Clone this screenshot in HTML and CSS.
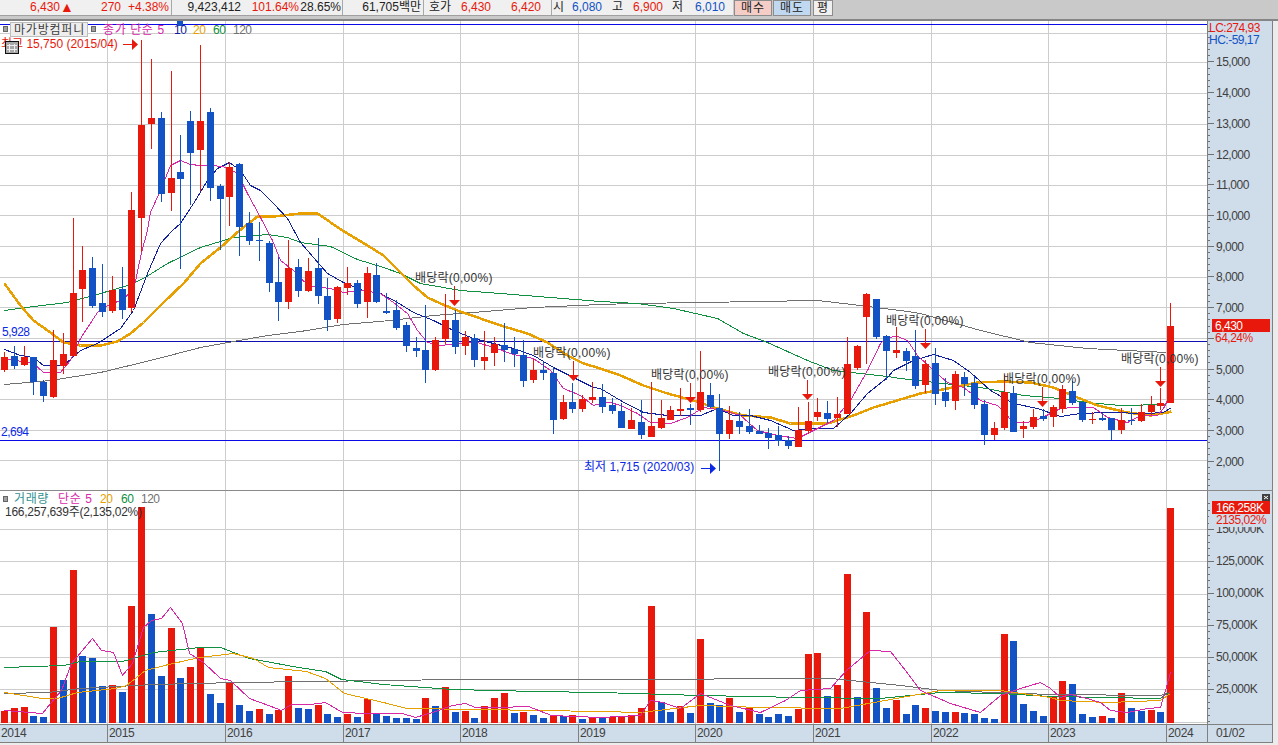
FILE: index.html
```html
<!DOCTYPE html>
<html lang="ko">
<head>
    <meta charset="UTF-8">
    <title>마가방컴퍼니 - 월봉 차트</title>
    <link rel="stylesheet" href="styles.css">
</head>
<body>
    <div class="quote-bar">
        <div class="quote-cells">
            <div class="cell">
                <span class="red w60">6,430</span><span class="red tri">▲</span><span class="red w48">270</span><span class="red w48">+4.38%</span>
            </div>
            <div class="cell">
                <span class="w69">9,423,412</span><span class="red w58">101.64%</span><span class="w42">28.65%</span>
            </div>
            <div class="cell">
                <span class="w78">61,705백만</span>
            </div>
            <div class="cell">
                <span class="w27">호가</span><span class="red w40">6,430</span><span class="red w50">6,420</span><span class="w10"></span>
            </div>
            <div class="cell last">
                <span class="w12">시</span><span class="blue w38">6,080</span><span class="w21">고</span><span class="red w40">6,900</span><span class="w20">저</span><span class="blue w42">6,010</span><span class="w8"></span>
            </div>
        </div>
        <button class="btn buy">매수</button>
        <button class="btn sell">매도</button>
        <button class="btn avg">평</button>
    </div>

    <div class="chart">
        <div class="pane price-pane">
            <svg class="plot" id="pricePlot" viewBox="0 21 1207 469"></svg>
            <svg class="axis" id="priceAxis" viewBox="1208 21 64 469"></svg>
        </div>
        <div class="pane volume-pane">
            <svg class="plot" id="volumePlot" viewBox="0 491 1207 233"></svg>
            <svg class="axis" id="volumeAxis" viewBox="1208 491 64 233"></svg>
        </div>
        <div class="dates" id="dates"></div>
    </div>

    <script src="chart.js"></script>
</body>
</html>
```

FILE: styles.css
```css
* {
    box-sizing: border-box;
}

html, body {
    margin: 0;
    padding: 0;
    height: 745px;
    overflow: hidden;
}

body {
    background: #ececec;
    color: #222;
    font-family: "Liberation Sans", "Noto Sans CJK KR", sans-serif;
    font-size: 12px;
}

.red { color: #e8180c; }
.blue { color: #1252c4; }

/* Quote strip */
.quote-bar {
    display: flex;
    height: 21px;
    background: #c9c9c9;
    border-bottom: 2px solid #858585;
}

.quote-cells {
    display: flex;
    width: 733px;
    height: 16px;
    background: #f0f0f0;
    border-bottom: 1px solid #a0a0a0;
    line-height: 15px;
}

.cell {
    display: flex;
    border-right: 1px solid #a8a8a8;
}

.cell.last {
    border-right: none;
}

.cell span {
    display: block;
    text-align: right;
    white-space: nowrap;
}

.cell .tri { width: 13px; font-size: 14px; line-height: 14px; }
.w8 { width: 8px; }
.w10 { width: 10px; }
.w12 { width: 12px; }
.w20 { width: 20px; }
.w21 { width: 21px; }
.w27 { width: 27px; }
.w38 { width: 38px; }
.w40 { width: 40px; }
.w42 { width: 42px; }
.w48 { width: 48px; }
.w50 { width: 50px; }
.w58 { width: 58px; }
.w60 { width: 60px; }
.w69 { width: 69px; }
.w78 { width: 78px; }

.quote-cells .cell:nth-child(1) { width: 172px; }
.quote-cells .cell:nth-child(2) { width: 171px; }
.quote-cells .cell:nth-child(3) { width: 81px; }
.quote-cells .cell:nth-child(4) { width: 128px; }

.btn {
    height: 16px;
    margin: 0 0 0 1px;
    padding: 0;
    border: 1px solid #8c8c8c;
    font: inherit;
    line-height: 13px;
    letter-spacing: 1px;
    color: #222;
}

.buy { width: 38px; background: #f4cdc6; }
.sell { width: 38px; background: #c0d8f0; }
.avg { width: 20px; margin-left: 2px; background: #f0f0f0; }

/* Chart */
.chart {
    width: 1273px;
}

.pane {
    display: flex;
    background: #fff;
}

.price-pane {
    height: 470px;
    border-bottom: 1px solid #8a8a8a;
}

.volume-pane {
    height: 233px;
}

.plot {
    display: block;
    width: 1207px;
    height: 100%;
    flex: none;
}

.price-pane .plot,
.price-pane .axis {
    height: 469px;
}

.axis {
    display: block;
    width: 66px;
    height: 100%;
    flex: none;
    background: #cfdcea;
    border-left: 1px solid #808080;
    border-right: 1px solid #808080;
}

.dates {
    display: flex;
    height: 19px;
    background: #cfdcea;
    border-top: 1px solid #808080;
    border-bottom: 1px solid #808080;
    border-right: 1px solid #808080;
    color: #404040;
    line-height: 17px;
    letter-spacing: -0.3px;
}

.dates span {
    flex: none;
    padding-left: 1px;
    border-right: 1px solid #808080;
}

.dates span:last-child {
    padding-left: 8px;
    border-right: none;
}

/* SVG parts */
svg text {
    font-family: "Liberation Sans", "Noto Sans CJK KR", sans-serif;
    font-size: 12px;
    letter-spacing: -0.5px;
    dominant-baseline: central;
    white-space: pre;
}

svg text.spaced { letter-spacing: 0.6px; }
svg text.tag { letter-spacing: 0.8px; }
svg text.plain { letter-spacing: 0; }
svg text.tight { letter-spacing: -0.28px; }
svg text.dividend { letter-spacing: 0.25px; fill: #333; }

.grid { stroke: #cdcdcd; stroke-width: 1; shape-rendering: crispEdges; }
.tick { stroke: #707070; stroke-width: 1; shape-rendering: crispEdges; }
.level { stroke-width: 1; shape-rendering: crispEdges; }

.ma { fill: none; stroke-width: 1; shape-rendering: crispEdges; }
.ma5 { stroke: #d828a8; }
.ma10 { stroke: #10209c; }
.ma20 { stroke: #e8a000; }
.ma20.thick { stroke-width: 2.5; }
.ma60 { stroke: #109040; }
.ma120 { stroke: #707070; }

.up { fill: #e8180c; }
.down { fill: #1252c4; }

.t-red { fill: #e8180c; }
.t-blue { fill: #1252c4; }
.t-lblue { fill: #0a28e6; }
.t-white { fill: #fff; }
.t-dark { fill: #333; }
.t-axis { fill: #404040; }
.t-mag { fill: #d828a8; }
.t-navy { fill: #10209c; }
.t-org { fill: #e8a000; }
.t-grn { fill: #109040; }
.t-gray { fill: #707070; }
.t-teal { fill: #309090; }

.stock-tag { fill: #eeeeee; stroke: #bdbdbd; shape-rendering: crispEdges; }
.bullet { fill: #a0a0a0; stroke: #666; shape-rendering: crispEdges; }
```

FILE: chart.js
```js
// monthly candles, values are pixel rows of the plot: [colour, body top, body bottom, high, low]
const candles = [
    ['r',357,370,352,372],['b',356,366,346,369],['r',357,365,346,366],['b',357,382,357,395],['b',382,396,380,402],
    ['r',360,397,330,398],['r',354,366,333,374],['r',293,356,218,356],['r',270,289,246,322],['b',268,306,257,308],
    ['b',303,312,264,317],['r',290,311,276,313],['b',289,310,267,319],['r',210,308,192,312],['r',125,218,40,252],
    ['r',118,124,59,149],['b',118,194,112,202],['r',178,193,71,211],['b',172,179,135,269],['b',121,153,111,205],
    ['r',121,150,45,191],['b',112,188,108,201],['b',186,199,184,250],['r',167,197,162,226],['b',164,227,163,256],
    ['b',223,241,212,245],['b',240,241,222,261],['b',243,283,241,292],['b',282,302,257,321],['r',268,302,240,309],
    ['b',267,291,259,297],['r',271,291,258,292],['b',268,296,238,304],['b',296,320,278,331],['r',287,319,286,323],
    ['r',283,288,267,295],['b',283,304,280,308],['r',273,302,267,318],['b',275,302,263,303],['b',311,313,293,314],
    ['b',310,328,300,330],['b',325,346,322,352],['b',348,351,337,357],['b',350,370,305,383],['r',340,370,337,371],
    ['r',320,339,294,344],['b',320,347,310,354],['r',337,346,331,355],['b',338,360,334,367],['r',357,361,331,370],
    ['r',344,353,337,366],['b',345,350,323,362],['b',349,354,337,367],['b',355,381,340,387],['r',370,380,359,383],
    ['b',370,373,362,380],['b',373,420,367,434],['r',402,419,395,420],['b',402,409,383,413],['r',399,409,395,412],
    ['r',397,400,382,403],['b',397,407,384,413],['b',405,411,398,414],['b',411,428,403,428],['r',420,429,408,429],
    ['b',422,435,400,439],['r',426,437,382,437],['r',418,428,400,429],['r',410,420,406,420],['r',409,411,388,416],
    ['b',408,410,404,425],['r',392,410,351,412],['b',395,407,383,408],['b',408,434,394,471],['r',420,434,406,439],
    ['b',421,427,412,434],['b',426,432,409,434],['b',431,434,425,434],['b',433,438,428,449],['b',435,441,426,446],
    ['b',440,446,436,449],['r',430,447,407,447],['r',421,431,402,434],['r',412,417,398,421],['b',413,419,401,423],
    ['r',414,418,397,427],['r',364,414,337,414],['r',346,368,345,370],['r',294,317,293,364],['b',299,337,299,339],
    ['b',336,351,335,380],['r',350,353,327,358],['b',351,361,348,371],['b',356,386,330,389],['r',364,385,360,393],
    ['b',363,394,348,405],['b',392,401,378,407],['r',374,401,371,410],['b',377,384,372,396],['b',383,405,376,409],
    ['b',404,435,400,445],['r',428,435,422,440],['r',392,428,375,430],['b',393,432,386,432],['r',426,429,421,438],
    ['r',417,427,409,429],['b',416,419,409,421],['r',407,417,405,427],['r',389,409,385,413],['b',391,403,381,405],
    ['b',402,420,402,422],['r',419,420,412,424],['b',418,420,413,421],['b',418,430,418,440],['r',420,430,408,434],
    ['b',420,421,408,425],['r',412,421,404,422],['r',405,412,396,415],['r',403,406,388,410],['r',326,403,303,403]
];

const volumes = [
    ['r',711],['r',708],['r',707],['b',716],['b',717],['r',627],['b',680],['r',570],['b',656],['b',658],
    ['b',686],['r',685],['b',692],['r',606],['r',507],['b',614],['b',676],['r',628],['b',678],['r',667],
    ['r',647],['b',694],['b',703],['r',682],['b',705],['b',711],['r',709],['b',714],['r',710],['r',676],
    ['b',708],['b',709],['r',705],['b',714],['b',717],['r',714],['b',717],['r',699],['b',713],['b',716],
    ['b',718],['b',718],['b',719],['r',698],['b',706],['r',687],['b',712],['r',711],['b',718],['r',706],
    ['r',698],['r',693],['b',713],['r',712],['b',715],['b',718],['r',716],['b',716],['r',715],['b',719],
    ['r',717],['b',718],['r',717],['r',716],['r',715],['r',708],['r',606],['b',702],['b',712],['r',706],
    ['b',713],['r',639],['b',703],['b',705],['r',698],['b',712],['r',707],['b',714],['b',717],['b',714],
    ['b',716],['r',709],['r',654],['r',653],['b',696],['r',685],['r',574],['b',697],['r',612],['b',688],
    ['b',708],['r',700],['b',714],['b',705],['r',708],['b',711],['b',712],['r',712],['b',713],['b',714],
    ['b',718],['b',719],['r',634],['b',641],['b',704],['b',711],['b',716],['r',696],['r',681],['b',684],
    ['b',714],['b',717],['r',716],['b',718],['r',693],['b',708],['b',711],['r',710],['b',712],['r',508]
];

const priceLines = [
    ['ma120', [4,384, 50,380, 100,372, 150,360, 200,347, 233,341, 267,335, 300,331, 343,324, 390,320, 433,315, 473,312, 533,307, 600,304, 633,303, 700,302, 817,300, 843,303, 900,310, 920,313, 980,330, 1030,342, 1087,348, 1166,352]],
    ['ma60', [4,310, 33,306, 67,302, 100,293, 127,285, 143,278, 167,263, 200,247, 233,237, 267,234, 287,237, 300,242, 330,246, 357,259, 383,267, 400,273, 420,283, 460,290, 500,293, 550,297, 600,301, 637,303, 673,308, 717,318, 743,333, 767,342, 807,360, 833,370, 887,376, 900,378, 943,383, 980,387, 1023,395, 1060,398, 1087,402, 1120,405, 1166,404]],
    ['ma20 thick', [4,283, 20,305, 33,320, 50,332, 63,342, 80,345, 100,345, 117,341, 130,333, 143,322, 163,302, 183,283, 200,263, 220,247, 239,230, 257,216, 273,216, 300,213, 317,213, 342,230, 367,245, 383,255, 400,272, 413,285, 427,297, 440,303, 457,310, 480,318, 500,325, 527,333, 547,342, 567,355, 583,363, 600,368, 620,375, 643,385, 667,393, 693,400, 717,408, 743,415, 770,417, 790,423, 827,423, 853,415, 873,407, 900,399, 920,393, 947,388, 977,382, 1003,381, 1030,382, 1053,387, 1077,397, 1097,405, 1127,412, 1150,415, 1167,412, 1171,411]],
    ['ma10', [4,349, 20,355, 33,357, 43,365, 63,365, 80,350, 97,343, 120,328, 133,310, 147,273, 160,243, 172,230, 180,223, 193,203, 207,180, 217,168, 229,162, 240,170, 250,185, 260,190, 273,203, 287,218, 300,242, 327,273, 343,282, 363,290, 380,293, 397,302, 413,312, 433,320, 453,330, 473,338, 493,343, 513,348, 533,355, 553,367, 573,377, 593,387, 600,388, 620,400, 643,412, 667,415, 700,415, 717,408, 733,415, 750,415, 770,420, 793,430, 813,428, 833,428, 850,413, 867,393, 887,377, 893,370, 913,360, 933,354, 953,360, 970,372, 990,390, 1013,403, 1037,408, 1060,416, 1080,413, 1107,412, 1147,413, 1163,412, 1171,407]],
    ['ma5', [4,358, 33,363, 43,372, 60,372, 70,360, 80,338, 97,312, 107,305, 120,300, 133,290, 141,252, 147,230, 150,212, 160,190, 170,165, 180,160, 190,164, 200,165, 213,165, 227,167, 237,173, 247,193, 260,217, 272,240, 280,260, 293,270, 300,278, 310,286, 330,288, 343,292, 363,290, 380,293, 393,302, 407,313, 417,330, 427,342, 440,345, 460,343, 477,342, 493,347, 513,354, 533,358, 550,370, 563,388, 580,395, 593,405, 600,403, 610,402, 620,405, 637,413, 650,422, 670,423, 687,417, 703,407, 723,410, 740,415, 757,430, 777,435, 797,438, 813,430, 833,420, 850,400, 867,370, 880,343, 887,337, 897,336, 907,340, 917,355, 933,370, 947,382, 963,387, 980,400, 997,405, 1013,422, 1027,422, 1040,418, 1060,408, 1073,407, 1093,407, 1107,417, 1127,422, 1140,415, 1157,415, 1163,408, 1167,400]]
];

const volumeLines = [
    ['ma120', [4,693, 48,692, 80,688, 153,684, 237,682, 459,679, 600,679, 830,678, 900,685, 940,690, 1050,694, 1160,695, 1170,692]],
    ['ma60', [4,667, 63,665, 80,661, 122,661, 153,652, 199,647, 220,647, 249,658, 298,667, 325,671, 341,679, 383,684, 452,689, 536,691, 600,692, 700,695, 800,697, 880,698, 940,692, 1000,693, 1050,696, 1160,698, 1168,692]],
    ['ma20', [4,692, 42,698, 57,698, 77,692, 115,688, 126,685, 145,670, 168,664, 199,657, 233,653, 253,658, 268,667, 306,671, 325,678, 344,693, 383,702, 406,708, 478,709, 600,711, 640,712, 700,705, 760,707, 840,708, 940,690, 1000,690, 1050,697, 1060,700, 1107,702, 1160,700, 1170,693]],
    ['ma5', [4,710, 42,713, 50,703, 61,690, 71,663, 92,638, 101,650, 113,652, 122,675, 132,663, 143,627, 151,620, 161,618, 170,607, 182,623, 189,653, 203,662, 220,678, 230,680, 249,698, 268,705, 281,710, 291,704, 310,704, 325,702, 342,712, 367,713, 402,713, 415,717, 432,712, 452,705, 465,703, 475,707, 497,707, 528,706, 551,715, 574,716, 600,717, 640,715, 650,700, 662,702, 680,708, 700,693, 730,705, 760,712, 785,700, 800,690, 830,688, 846,670, 870,650, 890,651, 905,670, 920,690, 950,703, 980,712, 1000,695, 1020,688, 1040,682, 1050,688, 1060,697, 1070,694, 1083,697, 1100,702, 1110,710, 1127,712, 1147,708, 1160,707, 1165,690, 1170,672]]
];

const gridX = [107, 225, 343, 460, 578, 695, 813, 931, 1048, 1166];
const priceGridY = [33, 62, 93, 124, 155, 185, 215, 246, 277, 307, 338, 369, 399, 430, 460];
const volumeGridY = [529, 561, 594, 626, 657, 689, 722];
const dividends = [[415, 278, 454, 286], [533, 353, 573, 361], [651, 375, 690, 383], [768, 372, 807, 380], [886, 321, 925, 329], [1003, 379, 1042, 387], [1121, 359, 1160, 367]];

const yearLabels = ['2014', '2015', '2016', '2017', '2018', '2019', '2020', '2021', '2022', '2023', '2024'];

function candleX(i) {
    return Math.floor(4.5 + 9.8 * i);
}

function line(x1, y1, x2, y2, cls, extra) {
    return `<line x1="${x1}" y1="${y1}" x2="${x2}" y2="${y2}" class="${cls}" ${extra || ''}/>`;
}

function rect(x, y, w, h, cls) {
    return `<rect x="${x}" y="${y}" width="${w}" height="${h}" class="${cls}" shape-rendering="crispEdges"/>`;
}

function text(x, y, str, cls) {
    return `<text x="${x}" y="${y}" class="${cls}">${str}</text>`;
}

function grid(ys, top, bottom) {
    let out = '';
    ys.forEach(y => { out += line(0, y + 0.5, 1207, y + 0.5, 'grid'); });
    gridX.forEach(x => { out += line(x + 0.5, top, x + 0.5, bottom, 'grid'); });
    return out;
}

function maLines(list) {
    return list.map(([cls, pts]) => `<polyline class="ma ${cls}" transform="translate(0.5 0.5)" points="${pts.join(' ')}"/>`).join('');
}

function drawPricePlot() {
    let s = grid(priceGridY, 21, 490);

    // blue top line and dragged marker
    s += line(0, 24.5, 1207, 24.5, 'level', 'stroke="#0a0ae6"');
    s += line(0, 341.5, 1207, 341.5, 'level', 'stroke="#1010b0"');
    s += line(0, 440.5, 1207, 440.5, 'level', 'stroke="#0a0ae6"');
    s += rect(177, 21, 6, 5, 'down');

    s += maLines(priceLines);

    candles.forEach(([c, top, bottom, high, low], i) => {
        const x = candleX(i);
        const cls = c === 'r' ? 'up' : 'down';
        s += rect(x, high, 1, low - high, cls);
        s += rect(x - 3, top, 7, bottom - top, cls);
    });

    // dividend marks
    dividends.forEach(([tx, ty, ax, ay]) => {
        s += text(tx, ty, '배당락(0,00%)', 'dividend');
        s += rect(ax, ay, 1, 14, 'up');
        s += `<polygon class="up" points="${ax - 5},${ay + 14} ${ax + 6},${ay + 14} ${ax + 0.5},${ay + 20}"/>`;
    });

    s += text(2, 332, '5,928', 't-lblue');
    s += text(1, 432, '2,694', 't-lblue');

    // high and low
    s += text(1, 44, '최고 15,750 (2015/04)', 't-red plain');
    s += rect(123, 44, 10, 1, 'up');
    s += `<polygon class="up" points="132,39 138,44.5 132,50"/>`;
    s += text(584, 467, '최저 1,715 (2020/03)', 't-lblue plain');
    s += `<rect x="701" y="468" width="10" height="1" fill="#0a28e6"/><polygon fill="#0a28e6" points="710,463 716,468.5 710,474"/>`;

    // legend
    s += rect(3.5, 26.5, 4, 5, 'bullet');
    s += `<rect x="10.5" y="22.5" width="77" height="14" class="stock-tag"/>`;
    s += text(14, 30, '마가방컴퍼니', 't-axis tag');
    s += rect(91.5, 26.5, 4, 5, 'bullet');
    s += text(103, 30, '종가 단순 5', 't-mag spaced');
    s += text(174, 30, '10', 't-navy');
    s += text(193, 30, '20', 't-org');
    s += text(213, 30, '60', 't-grn');
    s += text(233, 30, '120', 't-gray');

    // small calendar button
    s += `<rect x="5.5" y="41.5" width="13" height="12" fill="#a8a8a8" stroke="#111" shape-rendering="crispEdges"/>`;
    s += line(7, 45.5, 17, 45.5, 'level', 'stroke="#eee"');
    s += line(7, 49.5, 17, 49.5, 'level', 'stroke="#eee"');
    s += line(9.5, 44, 9.5, 52, 'level', 'stroke="#eee"');
    s += line(14.5, 44, 14.5, 52, 'level', 'stroke="#eee"');

    document.getElementById('pricePlot').innerHTML = s;
}

function drawPriceAxis() {
    let s = '';
    for (let p = 1000; p <= 16000; p += 200) {
        const y = Math.floor(399.7 + (4000 - p) * 0.0307) + 0.5;
        if (y < 21 || y > 490) continue;
        const major = p % 1000 === 0;
        s += line(1208, y, major ? 1214 : 1210, y, 'tick');
        if (major && p >= 2000 && p <= 15000 && p !== 6000) {
            s += text(1216, y + 0.5, p.toLocaleString('en-US'), 't-axis');
        }
    }
    s += text(1209, 28, 'LC:274,93', 't-red');
    s += text(1209, 40, 'HC:-59,17', 't-blue');
    s += rect(1212, 319, 58, 13, 'up');
    s += text(1215, 325.5, '6,430', 't-white');
    s += text(1215, 338, '64,24%', 't-red');
    document.getElementById('priceAxis').innerHTML = s;
}

function drawVolumePlot() {
    let s = grid(volumeGridY, 491, 724);

    volumes.forEach(([c, top], i) => {
        s += rect(candleX(i) - 3, top, 7, 723 - top, c === 'r' ? 'up' : 'down');
    });

    s += maLines(volumeLines);

    // legend
    s += rect(3.5, 496.5, 4, 5, 'bullet');
    s += text(14, 499, '거래량', 't-teal spaced');
    s += text(58, 499, '단순 5', 't-mag spaced');
    s += text(100, 499, '20', 't-org');
    s += text(121, 499, '60', 't-grn');
    s += text(141, 499, '120', 't-gray');
    s += text(5, 512, '166,257,639주(2,135,02%)', 't-dark tight');

    document.getElementById('volumePlot').innerHTML = s;
}

function drawVolumeAxis() {
    let s = '';
    for (let n = 0; n <= 170; n += 5) {
        const y = Math.floor(721.5 - n * 1.28) + 0.5;
        if (y < 491) continue;
        const major = n % 25 === 0 && n > 0;
        s += line(1208, y, major ? 1214 : 1210, y, 'tick');
        if (major && n <= 150) {
            s += text(1216, y - 0.5, (n * 1000).toLocaleString('en-US') + 'K', 't-axis');
        }
    }
    s += `<rect x="1209" y="514" width="62" height="13" fill="#cfdcea"/>`;
    s += rect(1212, 501, 58, 13, 'up');
    s += text(1216, 507.5, '166,258K', 't-white');
    s += text(1216, 520, '2135,02%', 't-red');
    // close box
    s += `<rect x="1262" y="494" width="8" height="7" fill="#404040"/>`;
    s += `<path d="M1264 496 L1268 499 M1268 496 L1264 499" stroke="#fff" stroke-width="1"/>`;
    document.getElementById('volumeAxis').innerHTML = s;
}

function drawDates() {
    const stops = [0].concat(gridX, [1207]);
    let html = '';
    yearLabels.forEach((year, i) => {
        html += `<span style="width:${stops[i + 1] - stops[i] + (i === 0 ? 1 : 0)}px">${year}</span>`;
    });
    html += '<span>01/02</span>';
    document.getElementById('dates').innerHTML = html;
}

drawPricePlot();
drawPriceAxis();
drawVolumePlot();
drawVolumeAxis();
drawDates();
```
